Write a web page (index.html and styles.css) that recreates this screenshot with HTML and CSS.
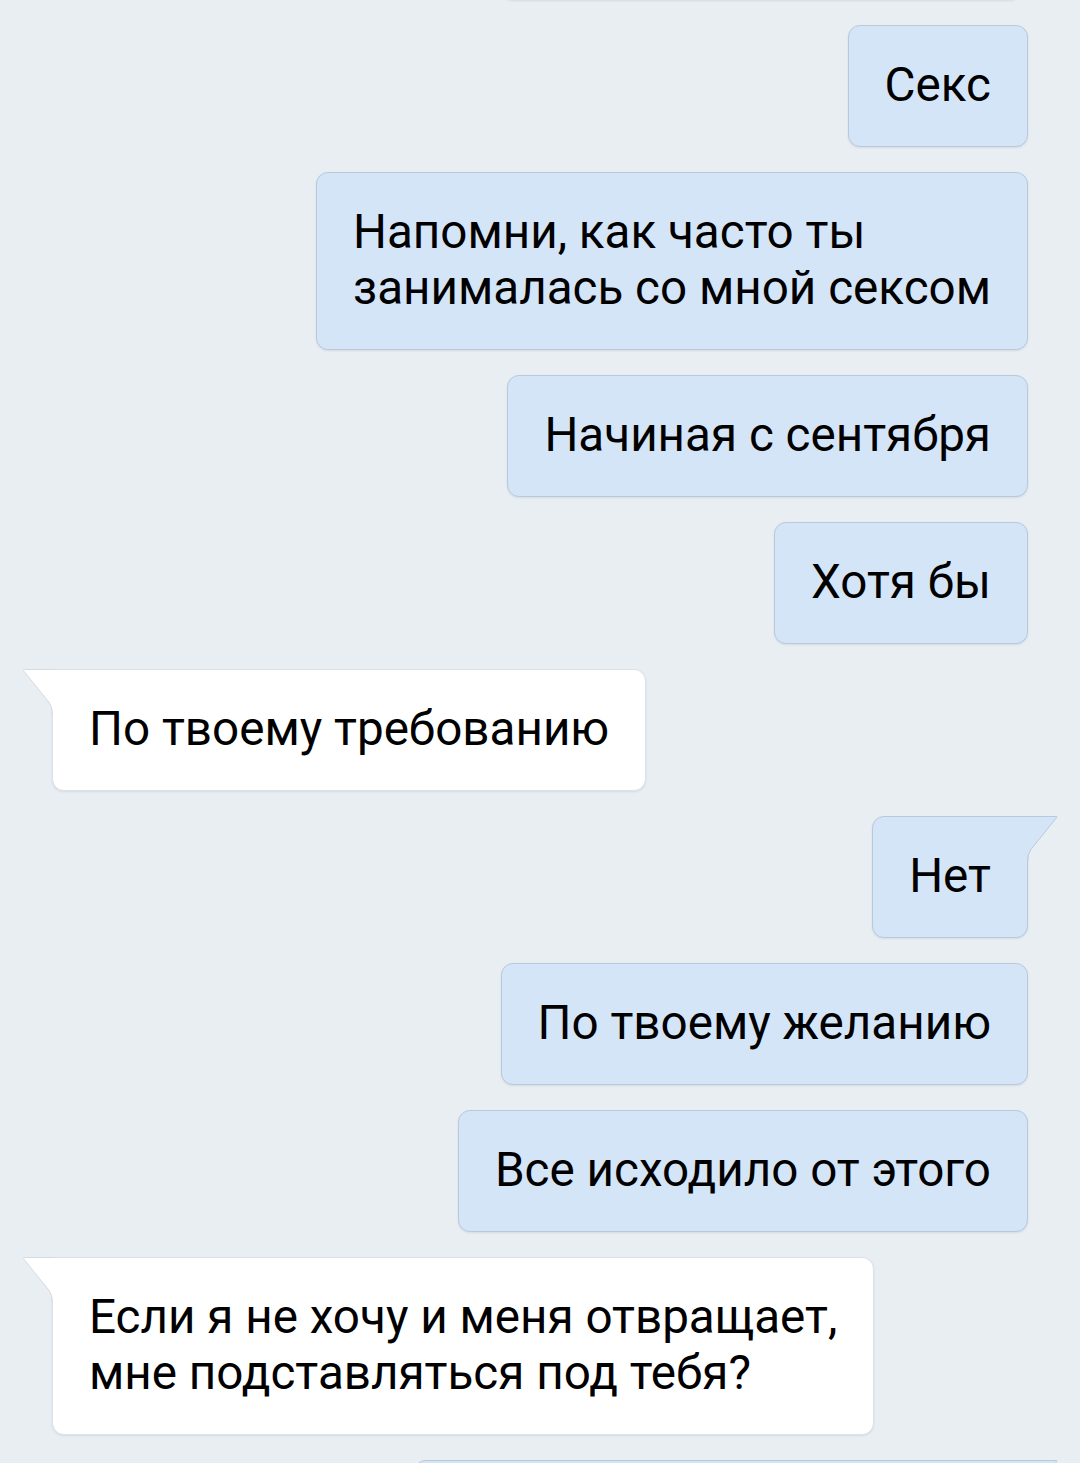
FILE: index.html
```html
<!DOCTYPE html>
<html lang="ru">
<head>
  <meta charset="UTF-8">
  <title>Диалог</title>
  <link rel="stylesheet" href="styles.css">
</head>
<body>
  <div class="chat">
    <div class="msg out cut-top">&nbsp;</div>

    <div class="msg out">Секс</div>
    <div class="msg out">Напомни, как часто ты<br>занималась со мной сексом</div>
    <div class="msg out">Начиная с сентября</div>
    <div class="msg out">Хотя бы</div>

    <div class="msg in tail"><svg class="tail-svg" width="32" height="46" viewBox="0 0 32 46"><path class="tail-fill" d="M33 0 L1.5 0 Q0 0 1 1.3 L27 33 Q30.5 37.5 30.5 46 L33 46 Z"/><path class="tail-line" d="M33 0.5 L2 0.5 Q0.6 0.5 1.4 1.6 L27 33.3 Q30.5 37.8 30.5 46"/></svg>По твоему требованию</div>

    <div class="msg out tail"><svg class="tail-svg" width="32" height="46" viewBox="0 0 32 46"><path class="tail-fill" d="M33 0 L1.5 0 Q0 0 1 1.3 L27 33 Q30.5 37.5 30.5 46 L33 46 Z"/><path class="tail-line" d="M33 0.5 L2 0.5 Q0.6 0.5 1.4 1.6 L27 33.3 Q30.5 37.8 30.5 46"/></svg>Нет</div>
    <div class="msg out">По твоему желанию</div>
    <div class="msg out">Все исходило от этого</div>

    <div class="msg in tail"><svg class="tail-svg" width="32" height="46" viewBox="0 0 32 46"><path class="tail-fill" d="M33 0 L1.5 0 Q0 0 1 1.3 L27 33 Q30.5 37.5 30.5 46 L33 46 Z"/><path class="tail-line" d="M33 0.5 L2 0.5 Q0.6 0.5 1.4 1.6 L27 33.3 Q30.5 37.8 30.5 46"/></svg>Если я не хочу и меня отвращает,<br>мне подставляться под тебя?</div>

    <div class="msg out tail next"><svg class="tail-svg" width="32" height="46" viewBox="0 0 32 46"><path class="tail-fill" d="M33 0 L1.5 0 Q0 0 1 1.3 L27 33 Q30.5 37.5 30.5 46 L33 46 Z"/><path class="tail-line" d="M33 0.5 L2 0.5 Q0.6 0.5 1.4 1.6 L27 33.3 Q30.5 37.8 30.5 46"/></svg>&nbsp;</div>
  </div>
</body>
</html>
```

FILE: styles.css
```css
body {
  margin: 0;
  background: #e9eef3;
  font-family: Roboto, "Noto Sans", sans-serif;
  color: #000;
  overflow: hidden;
  height: 1463px;
}
.chat {
  display: flex;
  flex-direction: column;
  gap: 25px;
  padding: 0 52px;
}
.msg {
  position: relative;
  font-size: 47.6px;
  line-height: 56px;
  padding: 31px 36px 33px;
  border-radius: 12px;
}
.out {
  align-self: flex-end;
  background: #d5e5f8;
  border: 1px solid #b9c9dc;
  box-shadow: 0 1px 2px rgba(60, 80, 110, 0.12);
  --tail-bg: #d5e5f8;
  --tail-bd: #b9c9dc;
}
.in {
  align-self: flex-start;
  background: #fff;
  border: 1px solid #dce2e8;
  box-shadow: 0 1px 2px rgba(60, 80, 110, 0.12);
  --tail-bg: #fff;
  --tail-bd: #d4dbe2;
}
.in.tail {
  border-top-left-radius: 0;
}
.out.tail {
  border-top-right-radius: 0;
}
.tail-svg {
  position: absolute;
  top: -1px;
}
.in .tail-svg {
  left: -31px;
}
.out .tail-svg {
  right: -31px;
  transform: scaleX(-1);
}
.tail-fill {
  fill: var(--tail-bg);
}
.tail-line {
  fill: none;
  stroke: var(--tail-bd);
  stroke-width: 1;
}
.cut-top {
  box-sizing: border-box;
  width: 521px;
  height: 102px;
  margin-top: -102px;
  margin-right: 6px;
}
.next {
  width: 540px;
}
```
